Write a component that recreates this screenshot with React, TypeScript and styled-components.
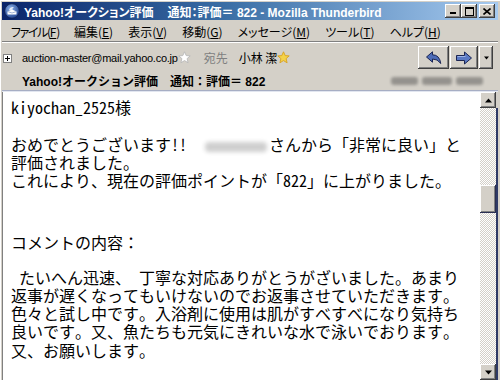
import React from 'react';
import styled, { createGlobalStyle } from 'styled-components';

const GlobalStyle = createGlobalStyle`
  html, body { margin: 0; padding: 0; background: #d4d0c8; overflow: hidden; }
  #root { width: 500px; height: 380px; }
`;

const JP = `"Noto Sans CJK JP", "Liberation Sans", sans-serif`;
const MONO = `"Noto Sans Mono CJK JP", "Noto Sans CJK JP", monospace`;
const UI = `"Liberation Sans", "Noto Sans CJK JP", sans-serif`;

const Window = styled.div`
  width: 500px;
  height: 380px;
  box-sizing: border-box;
  background: #d4d0c8;
  padding: 2px 2px 0 2px;
  box-shadow: inset 1px 1px #ffffff;
  display: flex;
  flex-direction: column;
  overflow: hidden;
`;

const TitleBar = styled.div`
  height: 18px;
  flex: none;
  display: flex;
  align-items: center;
  padding: 0 3px 0 2px;
  background: linear-gradient(to right, #0a246a 0%, #3a6ea5 45%, #a6caf0 100%);
`;

const TitleText = styled.div`
  flex: 1;
  margin-left: 4px;
  color: #ffffff;
  font-family: ${UI};
  font-weight: bold;
  font-size: 12px;
  font-feature-settings: 'palt';
  white-space: pre;
`;

const WideSpace = styled.span`
  display: inline-block;
  width: 14px;
`;

const CaptionButton = styled.div<{ $gap?: number }>`
  width: 16px;
  height: 14px;
  margin-left: ${(p) => p.$gap ?? 0}px;
  background: #d4d0c8;
  box-shadow: inset -1px -1px #404040, inset 1px 1px #ffffff, inset -2px -2px #808080;
  display: flex;
  align-items: center;
  justify-content: center;
`;

const MenuBar = styled.div`
  height: 21px;
  flex: none;
  display: flex;
  align-items: center;
  gap: 15px;
  padding: 2px 0 0 9px;
  box-sizing: border-box;
  font-family: ${JP};
  font-size: 12px;
  font-feature-settings: 'palt';
  color: #000;
`;

const MenuItem = styled.span<{ $tight?: boolean }>`
  white-space: pre;
  letter-spacing: ${(p) => (p.$tight ? '-1.4px' : '0')};
  u { text-decoration: underline; text-underline-offset: 1px; letter-spacing: 0; }
`;

const Separator = styled.div`
  height: 0;
  flex: none;
  border-top: 1px solid #808080;
  border-bottom: 1px solid #ffffff;
`;

const HeaderPane = styled.div`
  flex: none;
  height: 47px;
  display: flex;
  flex-direction: column;
  padding-top: 3px;
  box-sizing: border-box;
`;

const HeaderRow = styled.div`
  height: 23px;
  display: flex;
  align-items: center;
  padding-left: 1px;
  padding-right: 5px;
`;

const Toggle = styled.div`
  width: 7px;
  height: 7px;
  border: 1px solid #808080;
  background: #fff;
  display: flex;
  align-items: center;
  justify-content: center;
  margin-top: 1px;
`;

const Email = styled.span`
  margin-left: 10px;
  font-family: ${UI};
  font-size: 11px;
  letter-spacing: -0.25px;
  color: #000;
`;

const Label = styled.span`
  margin-left: 13px;
  font-family: ${JP};
  font-size: 12px;
  color: #808080;
`;

const Name = styled.span`
  margin-left: 11px;
  font-family: ${JP};
  font-size: 12px;
  color: #000;
  white-space: pre;
`;

const Spacer = styled.div`
  flex: 1;
`;

const ToolButton = styled.div<{ $w: number }>`
  width: ${(p) => p.$w}px;
  height: 23px;
  box-sizing: border-box;
  background: #d4d0c8;
  box-shadow: inset -1px -1px #404040, inset 1px 1px #ffffff, inset -2px -2px #808080;
  display: flex;
  align-items: center;
  justify-content: center;
  margin-left: 1px;
`;

const SubjectRow = styled.div`
  height: 21px;
  display: flex;
  align-items: center;
  padding: 2px 15px 0 20px;
  box-sizing: border-box;
`;

const Subject = styled.span`
  font-family: ${UI};
  font-weight: bold;
  font-size: 12px;
  white-space: pre;
  color: #000;
`;

const Blob = styled.span<{ $w: number }>`
  display: inline-block;
  width: ${(p) => p.$w}px;
  height: 8px;
  margin-left: 4px;
  border-radius: 3px;
  background: #8a8884;
  filter: blur(1.6px);
  opacity: 0.85;
`;

const BodyPane = styled.div`
  flex: 1;
  display: flex;
  min-height: 0;
  border-top: 1px solid #a7aec4;
  box-shadow: inset 0 1px #e2e6f0;
`;

const Content = styled.div`
  flex: 1;
  background: #ffffff;
  border-left: 1px solid #808080;
  margin-top: 1px;
  padding: 6px 0 0 8px;
  font-family: ${MONO};
  font-size: 16px;
  color: #000;
  overflow: hidden;
`;

const Line = styled.div`
  height: 18.25px;
  line-height: 18.25px;
  white-space: pre;
`;

const Gap = styled.div<{ $h: number }>`
  height: ${(p) => p.$h}px;
`;

const Hidden = styled.span`
  display: inline-block;
  width: 62px;
  height: 10px;
  margin: 0 2px;
  vertical-align: -1px;
  border-radius: 4px;
  background: #cfcfcf;
  filter: blur(2px);
`;

const ScrollBar = styled.div`
  width: 16px;
  flex: none;
  display: flex;
  flex-direction: column;
  margin-top: 1px;
`;

const ScrollButton = styled.div`
  width: 16px;
  height: 16px;
  flex: none;
  box-sizing: border-box;
  background: #d4d0c8;
  box-shadow: inset -1px -1px #404040, inset 1px 1px #ffffff, inset -2px -2px #808080;
  display: flex;
  align-items: center;
  justify-content: center;
`;

const Track = styled.div`
  flex: 1;
  position: relative;
  background-color: #ffffff;
  background-image: repeating-conic-gradient(#d4d0c8 0 25%, #ffffff 0 50%);
  background-size: 2px 2px;
`;

const Thumb = styled.div`
  position: absolute;
  left: 0;
  width: 16px;
  height: 28px;
  box-sizing: border-box;
  background: #d4d0c8;
  box-shadow: inset -1px -1px #2b2f52, inset 1px 1px #ffffff, inset -2px -2px #808080;
`;

const EdgeLine = styled.div`
  width: 2px;
  flex: none;
  margin-top: 17px;
  background: #2f3a66;
`;

const TbIcon = () => (
  <svg width="16" height="16" viewBox="0 0 16 16">
    <defs>
      <radialGradient id="tbg" cx="0.4" cy="0.35" r="0.7">
        <stop offset="0" stopColor="#8fb4ea" />
        <stop offset="1" stopColor="#1d3f8c" />
      </radialGradient>
    </defs>
    <circle cx="8" cy="8" r="7.3" fill="url(#tbg)" stroke="#0e2050" strokeWidth="0.8" />
    <path d="M3.5 8.5 L8 6.5 L12.5 8.5 L12.5 11.5 L3.5 11.5 Z" fill="#ffffff" />
    <path d="M3.5 8.5 L8 10 L12.5 8.5" fill="none" stroke="#7d95c4" strokeWidth="0.7" />
    <path d="M5 7 Q6 3.5 10 4 Q8 5 8.5 6.8 Z" fill="#e8eefa" />
  </svg>
);

const MinGlyph = () => (
  <svg width="8" height="8" viewBox="0 0 8 8"><rect x="1" y="5" width="6" height="2" fill="#000" /></svg>
);
const MaxGlyph = () => (
  <svg width="9" height="9" viewBox="0 0 9 9">
    <rect x="0.5" y="0.5" width="8" height="8" fill="none" stroke="#000" />
    <rect x="0" y="0" width="9" height="2" fill="#000" />
  </svg>
);
const CloseGlyph = () => (
  <svg width="8" height="7" viewBox="0 0 8 7">
    <path d="M0.5 0.5 L7.5 6.5 M7.5 0.5 L0.5 6.5" stroke="#000" strokeWidth="1.6" />
  </svg>
);

const PlusGlyph = () => (
  <svg width="5" height="5" viewBox="0 0 5 5"><path d="M0 2.5 H5 M2.5 0 V5" stroke="#000" strokeWidth="1" /></svg>
);

const Star = ({ gold }: { gold?: boolean }) => (
  <svg width="13" height="13" viewBox="0 0 13 13" style={{ flex: 'none' }}>
    <path
      d="M6.5 0.8 L8.2 4.6 L12.2 4.9 L9.1 7.6 L10.1 11.8 L6.5 9.6 L2.9 11.8 L3.9 7.6 L0.8 4.9 L4.8 4.6 Z"
      fill={gold ? '#f4d24a' : '#ffffff'}
      stroke={gold ? '#d8a020' : '#b9b9b9'}
      strokeWidth="0.9"
      strokeLinejoin="round"
    />
  </svg>
);

const ReplyIcon = () => (
  <svg width="18" height="16" viewBox="0 0 18 16">
    <path d="M1.5 7 L7.5 1.8 L7.5 4.8 Q14.5 4.8 15.8 13.5 Q12.5 8.8 7.5 9 L7.5 12.2 Z" fill="#4d6cb8" stroke="#1b2552" strokeWidth="1" strokeLinejoin="round" />
  </svg>
);

const ForwardIcon = () => (
  <svg width="18" height="16" viewBox="0 0 18 16">
    <path d="M1.5 5.5 H9.5 V2 L16.5 8 L9.5 14 V10.5 H1.5 Z" fill="#5a79c4" stroke="#1b2552" strokeWidth="1" strokeLinejoin="round" />
    <path d="M2.5 6.5 H10.5" stroke="#9fb5e6" strokeWidth="1" />
  </svg>
);

const DownTri = ({ size = 7 }: { size?: number }) => (
  <svg width={size} height={Math.ceil(size / 2) + 1} viewBox="0 0 7 4"><path d="M0 0 H7 L3.5 4 Z" fill="#000" /></svg>
);
const UpTri = () => (
  <svg width="7" height="5" viewBox="0 0 7 4"><path d="M0 4 H7 L3.5 0 Z" fill="#000" /></svg>
);

type BodyLine = { text?: string; gap?: number; hidden?: [string, string] };

const body: BodyLine[] = [
  { text: 'kiyochan_2525様' },
  { text: '' },
  { hidden: ['おめでとうございます!!　', 'さんから「非常に良い」と'] },
  { text: '評価されました。' },
  { text: 'これにより、現在の評価ポイントが「822」に上がりました。' },
  { gap: 44 },
  { text: 'コメントの内容：' },
  { gap: 16 },
  { text: ' たいへん迅速、 丁寧な対応ありがとうがざいました。あまり' },
  { text: '返事が遅くなってもいけないのでお返事させていただきます。' },
  { text: '色々と試し中です。入浴剤に使用は肌がすべすべになり気持ち' },
  { text: '良いです。又、魚たちも元気にきれいな水で泳いでおります。' },
  { text: '又、お願いします。' },
];

const menus: [string, string][] = [
  ['ファイル', 'F'],
  ['編集', 'E'],
  ['表示', 'V'],
  ['移動', 'G'],
  ['メッセージ', 'M'],
  ['ツール', 'T'],
  ['ヘルプ', 'H'],
];

const scrollTop = 77;

export default function App() {
  return (
    <>
      <GlobalStyle />
      <Window>
        <TitleBar>
          <TbIcon />
          <TitleText>
            Yahoo!オークション評価<WideSpace />通知：評価＝ 822 - Mozilla Thunderbird
          </TitleText>
          <CaptionButton><MinGlyph /></CaptionButton>
          <CaptionButton><MaxGlyph /></CaptionButton>
          <CaptionButton $gap={2}><CloseGlyph /></CaptionButton>
        </TitleBar>
        <MenuBar>
          {menus.map(([label, key], i) => (
            <MenuItem key={key} $tight={i === 0}>
              {label}(<u>{key}</u>)
            </MenuItem>
          ))}
        </MenuBar>
        <Separator />
        <HeaderPane>
          <HeaderRow>
            <Toggle><PlusGlyph /></Toggle>
            <Email>auction-master@mail.yahoo.co.jp</Email>
            <Star />
            <Label>宛先</Label>
            <Name>小林 潔</Name>
            <Star gold />
            <Spacer />
            <ToolButton $w={31}><ReplyIcon /></ToolButton>
            <ToolButton $w={28}><ForwardIcon /></ToolButton>
            <ToolButton $w={14}><DownTri size={5} /></ToolButton>
          </HeaderRow>
          <SubjectRow>
            <Subject>{'Yahoo!オークション評価　通知：評価＝ 822'}</Subject>
            <Spacer />
            <Blob $w={27} />
            <Blob $w={30} />
            <Blob $w={27} />
          </SubjectRow>
        </HeaderPane>
        <BodyPane>
          <Content>
            {body.map((l, i) =>
              l.gap !== undefined ? (
                <Gap key={i} $h={l.gap} />
              ) : l.hidden ? (
                <Line key={i}>
                  {l.hidden[0]}
                  <Hidden />
                  {l.hidden[1]}
                </Line>
              ) : (
                <Line key={i}>{l.text}</Line>
              )
            )}
          </Content>
          <ScrollBar>
            <ScrollButton><UpTri /></ScrollButton>
            <Track>
              <Thumb style={{ top: scrollTop }} />
            </Track>
            <ScrollButton><DownTri /></ScrollButton>
          </ScrollBar>
          <EdgeLine />
        </BodyPane>
      </Window>
    </>
  );
}
